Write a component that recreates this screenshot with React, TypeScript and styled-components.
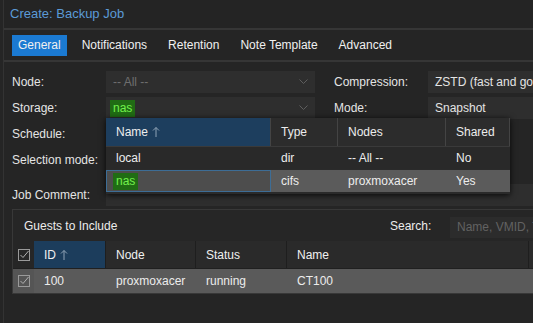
import React from "react";
import styled, { createGlobalStyle } from "styled-components";

const GlobalStyle = createGlobalStyle`
  html, body {
    margin: 0;
    padding: 0;
    background: #252525;
    overflow: hidden;
  }
  body {
    font-family: "Liberation Sans", Arial, sans-serif;
    font-size: 12px;
    color: #e2e2e2;
  }
`;

const Window = styled.div`
  position: relative;
  width: 620px;
  height: 323px;
  margin-left: 3px;
  border-left: 1px solid #333;
  background: #252525;
`;

const TitleBar = styled.div`
  height: 28px;
  line-height: 27px;
  padding-left: 6px;
  font-size: 13px;
  color: #5b9ad6;
  border-bottom: 2px solid #363636;
  background: #242424;
`;

const TabBar = styled.div`
  display: flex;
  align-items: center;
  gap: 9px;
  height: 30px;
  padding: 0 8px;
  border-bottom: 2px solid #363636;
`;

const Tab = styled.div<{ $active?: boolean }>`
  height: 21px;
  line-height: 21px;
  padding: 0 6px;
  color: #f0f0f0;
  background: ${p => (p.$active ? "#1b7ad2" : "transparent")};
`;

const Body = styled.div`
  padding: 9px 0 0 8px;
`;

const FormColumns = styled.div`
  display: flex;
  gap: 19px;
`;

const Column = styled.div<{ $width: number }>`
  display: flex;
  flex-direction: column;
  gap: 4px;
  width: ${p => p.$width}px;
`;

const Row = styled.div`
  display: flex;
  align-items: center;
  height: 22px;
`;

const Label = styled.div`
  width: 94px;
  flex: none;
  color: #e4e4e4;
`;

const Field = styled.div<{ $muted?: boolean }>`
  flex: 1;
  display: flex;
  align-items: center;
  justify-content: space-between;
  height: 22px;
  padding: 0 7px;
  background: #2e2e2e;
  color: ${p => (p.$muted ? "#6e6e6e" : "#e4e4e4")};
  box-sizing: border-box;
  white-space: nowrap;
  overflow: hidden;
`;

const Highlight = styled.span`
  color: #72f04c;
  background: #206c14;
  padding: 1px 3px 2px;
  margin-left: -3px;
`;

const CommentRow = styled(Row)`
  margin-top: 13px;
`;

const GuestsPanel = styled.div`
  margin-top: 3px;
  width: 600px;
  border: 1px solid #383838;
  background: #262626;
`;

const PanelHeader = styled.div`
  display: flex;
  align-items: center;
  height: 31px;
  padding: 0 0 0 11px;
`;

const PanelTitle = styled.div`
  flex: none;
  width: 366px;
  color: #ececec;
  font-size: 12px;
`;

const SearchLabel = styled.div`
  width: 60px;
  color: #ececec;
`;

const SearchInput = styled.div`
  flex: 1;
  height: 21px;
  line-height: 21px;
  padding-left: 7px;
  margin-top: 4px;
  background: #2c2c2c;
  color: #626262;
  white-space: nowrap;
`;

const GridRow = styled.div<{ $header?: boolean }>`
  display: grid;
  grid-template-columns: 21px 72px 90px 91px 242px 1fr;
  height: ${p => (p.$header ? 28 : 24)}px;
  background: ${p => (p.$header ? "#2a2a2a" : "#5a5a5a")};
  border-bottom: ${p => (p.$header ? "1px solid #202020" : "none")};
  box-sizing: border-box;
`;

const Cell = styled.div<{ $sorted?: boolean; $header?: boolean }>`
  display: flex;
  align-items: center;
  padding-left: 10px;
  color: ${p => (p.$header ? "#f0f0f0" : "#ececec")};
  background: ${p => (p.$sorted ? "#1c3d5c" : "transparent")};
  border-right: ${p => (p.$header ? "1px solid #1e1e1e" : "none")};
  white-space: nowrap;
  overflow: hidden;
`;

const CheckCell = styled.div<{ $header?: boolean }>`
  display: flex;
  align-items: center;
  justify-content: center;
  background: ${p => (p.$header ? "#262626" : "#555")};
`;

const Dropdown = styled.div`
  position: absolute;
  left: 102px;
  top: 118px;
  width: 404px;
  padding-bottom: 2px;
  background: #2a2a2a;
  box-shadow: 0 1px 6px rgba(0, 0, 0, 0.85);
`;

const DropRow = styled.div<{ $header?: boolean; $selected?: boolean }>`
  display: grid;
  grid-template-columns: 165px 67px 108px 1fr;
  height: ${p => (p.$header ? 29 : 22)}px;
  background: ${p => (p.$header ? "#2c2c2c" : p.$selected ? "#5b5b5b" : "#292929")};
  border-bottom: ${p => (p.$header ? "1px solid #3a3a3a" : "none")};
  margin-top: ${p => (p.$selected ? 1 : 0)}px;
  box-sizing: border-box;
`;

const DropCell = styled.div<{ $sorted?: boolean; $header?: boolean; $focus?: boolean }>`
  display: flex;
  align-items: center;
  padding-left: 10px;
  color: #ededed;
  background: ${p => (p.$sorted ? "#1d3e5e" : p.$focus ? "#4d4d4d" : "transparent")};
  border-right: ${p => (p.$header ? "1px solid #444" : "none")};
  outline: ${p => (p.$focus ? "1px solid #3d6d96" : "none")};
  outline-offset: -1px;
  white-space: nowrap;
`;

const SortArrow = () => (
  <svg width="8" height="12" viewBox="0 0 8 12" style={{ marginLeft: 4 }}>
    <path d="M4 11V1.5M1 4.5L4 1.5L7 4.5" fill="none" stroke="#8fa3b6" strokeWidth="1" />
  </svg>
);

const Chevron = () => (
  <svg width="9" height="6" viewBox="0 0 9 6">
    <path d="M0.5 0.5L4.5 4.5L8.5 0.5" fill="none" stroke="#5e5e5e" strokeWidth="1" />
  </svg>
);

const CheckBox = () => (
  <svg width="12" height="12" viewBox="0 0 12 12">
    <rect x="0.5" y="0.5" width="11" height="11" fill="none" stroke="#9a9a9a" />
    <path d="M2.5 6L5 8.5L10.5 2" fill="none" stroke="#b0b0b0" strokeWidth="1" />
  </svg>
);

const tabs = ["General", "Notifications", "Retention", "Note Template", "Advanced"];

const storages = [
  { name: "local", type: "dir", nodes: "-- All --", shared: "No" },
  { name: "nas", type: "cifs", nodes: "proxmoxacer", shared: "Yes" },
];

export default function App() {
  return (
    <>
      <GlobalStyle />
      <Window>
        <TitleBar>Create: Backup Job</TitleBar>
        <TabBar>
          {tabs.map(t => (
            <Tab key={t} $active={t === "General"}>{t}</Tab>
          ))}
        </TabBar>
        <Body>
          <FormColumns>
            <Column $width={303}>
              <Row>
                <Label>Node:</Label>
                <Field $muted>-- All --<Chevron /></Field>
              </Row>
              <Row>
                <Label>Storage:</Label>
                <Field><Highlight>nas</Highlight><Chevron /></Field>
              </Row>
              <Row>
                <Label>Schedule:</Label>
                <Field />
              </Row>
              <Row>
                <Label>Selection mode:</Label>
                <Field />
              </Row>
            </Column>
            <Column $width={290}>
              <Row>
                <Label>Compression:</Label>
                <Field>ZSTD (fast and good)</Field>
              </Row>
              <Row>
                <Label>Mode:</Label>
                <Field>Snapshot</Field>
              </Row>
            </Column>
          </FormColumns>
          <CommentRow>
            <Label>Job Comment:</Label>
            <Field />
          </CommentRow>
          <GuestsPanel>
            <PanelHeader>
              <PanelTitle>Guests to Include</PanelTitle>
              <SearchLabel>Search:</SearchLabel>
              <SearchInput>Name, VMID, Type</SearchInput>
            </PanelHeader>
            <GridRow $header>
              <CheckCell $header><CheckBox /></CheckCell>
              <Cell $header $sorted>ID<SortArrow /></Cell>
              <Cell $header>Node</Cell>
              <Cell $header>Status</Cell>
              <Cell $header>Name</Cell>
              <Cell $header />
            </GridRow>
            <GridRow>
              <CheckCell><CheckBox /></CheckCell>
              <Cell>100</Cell>
              <Cell>proxmoxacer</Cell>
              <Cell>running</Cell>
              <Cell>CT100</Cell>
              <Cell />
            </GridRow>
          </GuestsPanel>
        </Body>
        <Dropdown>
          <DropRow $header>
            <DropCell $header $sorted>Name<SortArrow /></DropCell>
            <DropCell $header>Type</DropCell>
            <DropCell $header>Nodes</DropCell>
            <DropCell $header>Shared</DropCell>
          </DropRow>
          {storages.map(s => {
            const selected = s.name === "nas";
            return (
              <DropRow key={s.name} $selected={selected}>
                <DropCell $focus={selected}>
                  {selected ? <Highlight>{s.name}</Highlight> : s.name}
                </DropCell>
                <DropCell>{s.type}</DropCell>
                <DropCell>{s.nodes}</DropCell>
                <DropCell>{s.shared}</DropCell>
              </DropRow>
            );
          })}
        </Dropdown>
      </Window>
    </>
  );
}
